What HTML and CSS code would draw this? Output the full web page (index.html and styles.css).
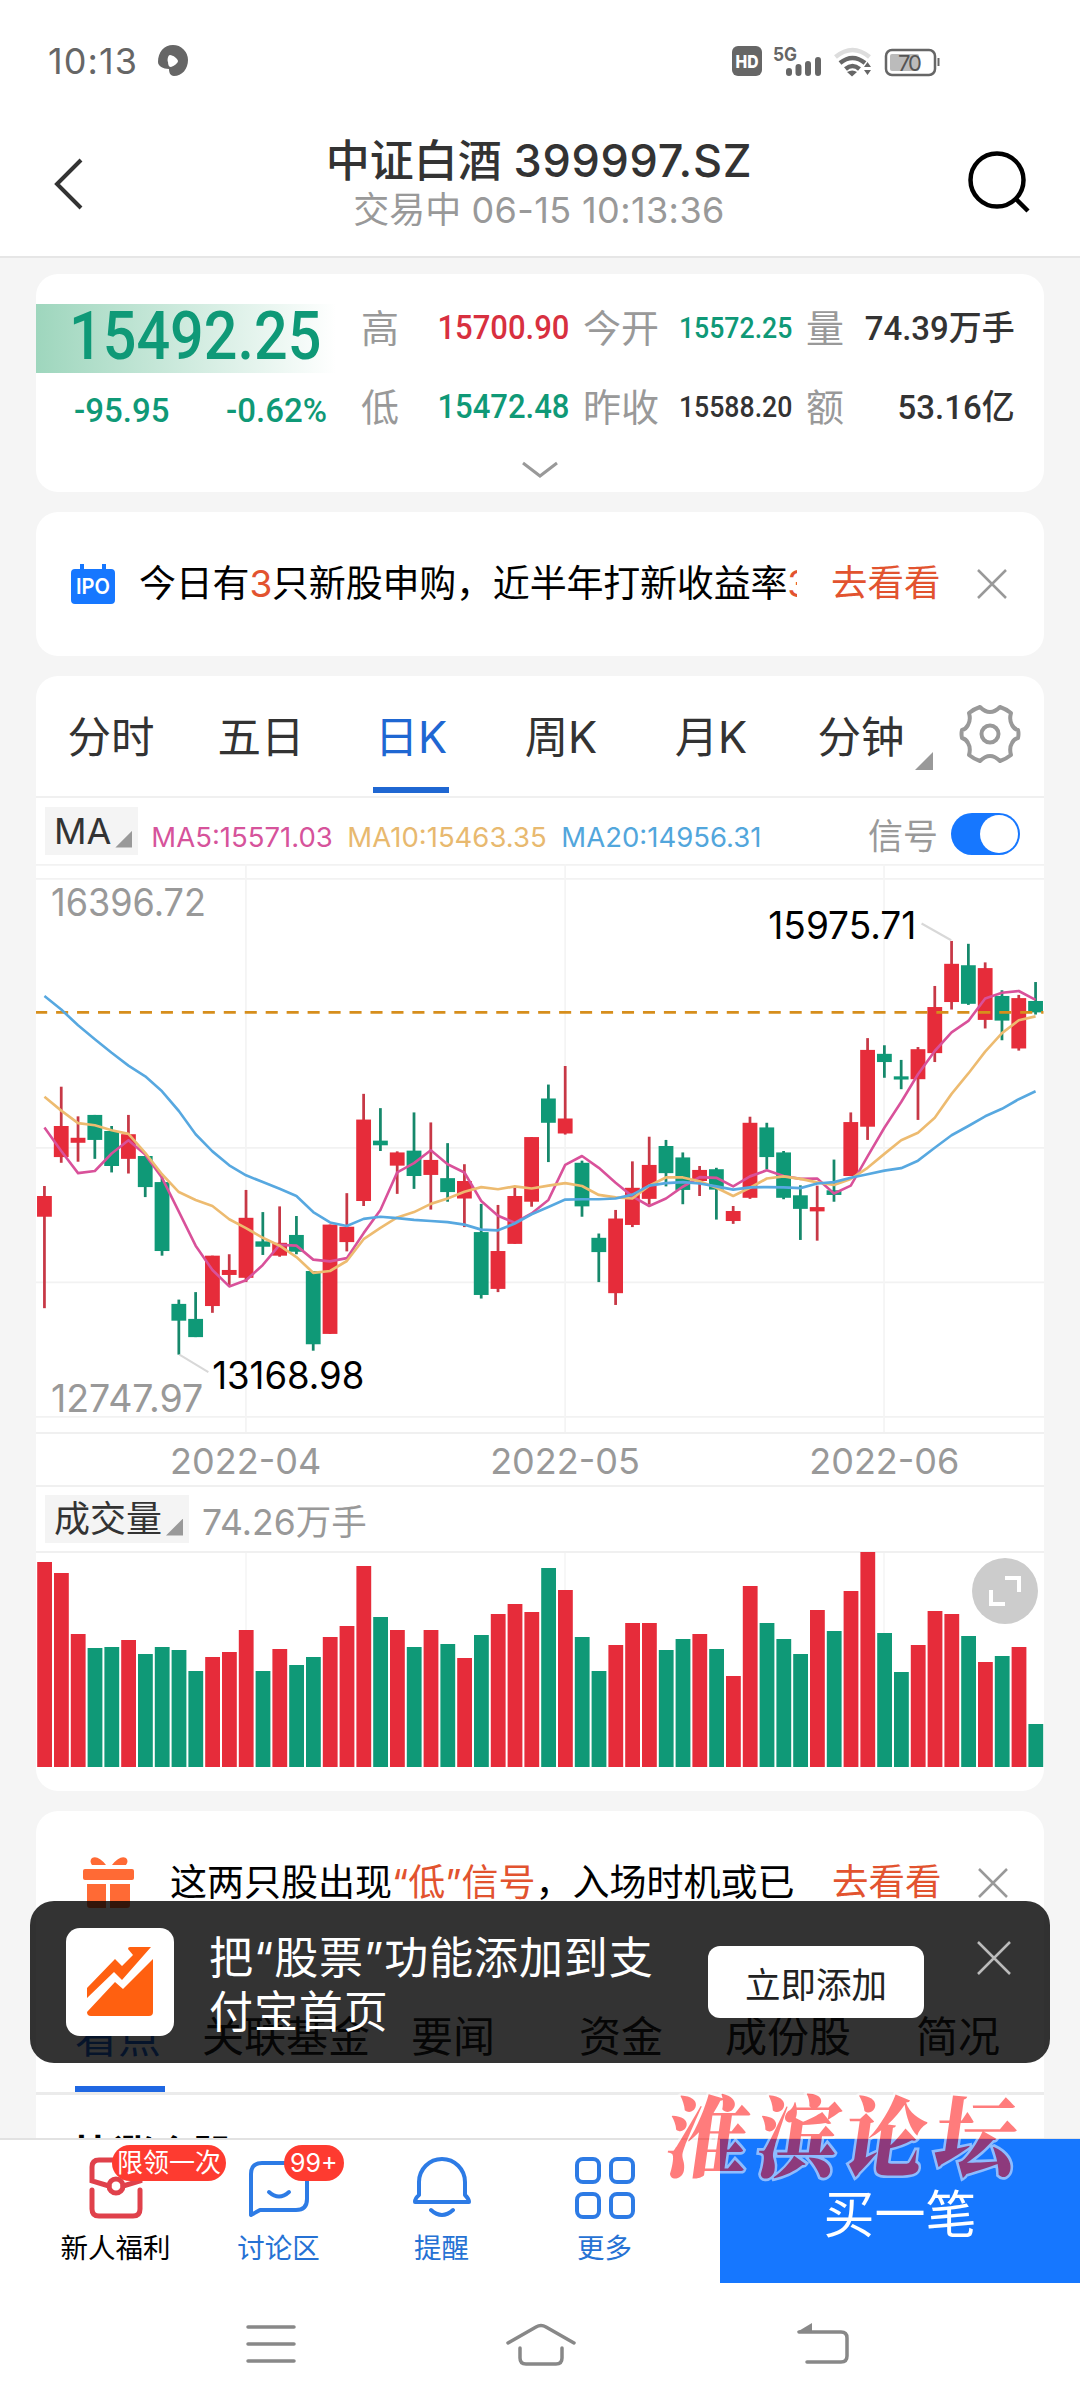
FILE: index.html
```html
<!DOCTYPE html>
<html lang="zh-CN">
<head>
<meta charset="utf-8">
<title>中证白酒 399997.SZ</title>
<link rel="stylesheet" href="styles.css">
</head>
<body>
<div class="phone">
  <header class="top">
    <div class="status">
      <span class="clock">10:13</span>
      <svg class="status-app" width="30" height="32" viewBox="0 0 30 32"><path fill-rule="evenodd" fill="#666" d="M15 0a15 15 0 0 1 15 15c0 9-6 16-14 16-4 0-5-4-5-7C5 24 0 21 0 17 0 7 6 0 15 0zM12 10c-2 0-3 5-2 7 0 3 1 5 3 5 3-1 7-4 7-6s-5-6-8-6z"/></svg>
      <svg class="status-icons" width="212" height="34" viewBox="0 0 212 34">
        <rect x="0" y="2" width="30" height="30" rx="6" fill="#666"/>
        <text x="3.500" y="23.500" font-size="18" font-weight="800" fill="#fff" textLength="23" lengthAdjust="spacingAndGlyphs" class="label">HD</text>
        <text x="41" y="16.500" font-size="19" font-weight="700" fill="#666" textLength="24" lengthAdjust="spacingAndGlyphs" class="label">5G</text>
        <path stroke="#666" stroke-width="6" stroke-linecap="round" d="M57 27v2M66.500 23v6M76 20v9M86 16v13"/>
        <g fill="none" stroke-width="4.500"><path stroke="#ddd" d="M103.500 13q17-14 34 0"/><path stroke="#666" d="M108 19q12.500-10 25 0M113.500 25q7-6 14 0"/></g>
        <path fill="#666" d="M115 28q5.500-3 10 0l-5 4.500zM132 23l3.500-5 3.500 5zM132 26l3.500 5 3.500-5z"/>
        <rect x="154" y="6" width="49" height="25" rx="6" fill="none" stroke="#666" stroke-width="2.500"/>
        <rect x="158" y="10" width="29" height="17" rx="2" fill="#bbb"/>
        <path stroke="#666" stroke-width="2" d="M206.500 14v8"/>
        <text x="166" y="26.500" font-size="22" fill="#555" textLength="24" class="label">70</text>
      </svg>
    </div>
    <div class="titlebar">
      <svg class="back" width="30" height="52" viewBox="0 0 30 52"><path d="M27 2 3 26l24 24" fill="none" stroke="#333" stroke-width="4"/></svg>
      <div class="heading">
        <h1>中证白酒 <span class="code">399997.SZ</span></h1>
        <p>交易中 <span class="time">06-15 10:13:36</span></p>
      </div>
      <svg class="search" width="64" height="64" viewBox="0 0 64 64"><g fill="none" stroke="#000" stroke-width="4.500"><circle cx="29" cy="29" r="26.500"/><path d="m48 48 12 12"/></g></svg>
    </div>
  </header>

  <main class="content">
    <section class="card quote">
      <div class="quote-body">
        <div class="last">
          <div class="price"><span class="din">15492.25</span></div>
          <div class="change"><span class="din">-95.95</span><span class="din">-0.62%</span></div>
        </div>
        <dl class="stats">
          <div><dt>高</dt><dd class="up din">15700.90</dd></div>
          <div><dt>今开</dt><dd class="down din small">15572.25</dd></div>
          <div><dt>量</dt><dd class="big">74.39万手</dd></div>
          <div><dt>低</dt><dd class="down din">15472.48</dd></div>
          <div><dt>昨收</dt><dd class="din small">15588.20</dd></div>
          <div><dt>额</dt><dd class="big">53.16亿</dd></div>
        </dl>
      </div>
      <svg class="expand" width="38" height="20" viewBox="0 0 38 20"><path d="m2 2 17 13L36 2" fill="none" stroke="#999" stroke-width="3"/></svg>
    </section>

    <section class="card notice ipo">
      <svg class="ipo-icon" width="44" height="40" viewBox="0 0 44 40"><path fill="#1677ff" d="M9 0h4v5h18V0h4v5h5q4 0 4 4v27q0 4-4 4H4q-4 0-4-4V9q0-4 4-4h5z"/><text x="5" y="30" font-size="22" font-weight="600" fill="#fff" textLength="34" lengthAdjust="spacingAndGlyphs" class="label">IPO</text></svg>
      <p class="notice-text">今日有<em>3</em>只新股申购，近半年打新收益率<em>3</em></p>
      <a class="go">去看看</a>
      <svg class="close" width="32" height="30" viewBox="0 0 32 30"><path d="m2 1 28 28M30 1 2 29" stroke="#999" stroke-width="2.500"/></svg>
    </section>

    <section class="card chart-card">
      <nav class="periods">
        <a>分时</a><a>五日</a><a class="active">日K</a><a>周K</a><a>月K</a><a class="more">分钟<i class="tri"></i></a>
        <svg class="gear" width="64" height="62" viewBox="0 0 64 62"><g fill="none" stroke="#999" stroke-width="4" stroke-linejoin="round"><path d="M22 4Q27 9 32 9T42 4Q48 6 53 10 51 17 54 22q2 4 6 5 1 4 0 8-4 1-6 5-3 5-1 12-5 4-11 6-5-5-10-5t-10 5Q16 56 11 52q2-7-1-12-2-4-6-5-1-4 0-8 4-1 6-5 3-5 1-12 5-4 11-6z"/><circle cx="32" cy="31" r="8.500"/></g></svg>
      </nav>
      <div class="ma-row">
        <span class="chip">MA<i class="tri"></i></span>
        <span class="ma ma5">MA5:15571.03</span>
        <span class="ma ma10">MA10:15463.35</span>
        <span class="ma ma20">MA20:14956.31</span>
        <span class="signal">信号</span>
        <span class="toggle"><i></i></span>
      </div>
      <svg id="candles" class="candles" width="1008" height="568" viewBox="104.500 11.600 2927 1590" preserveAspectRatio="none"></svg>
      <div class="dates"><span>2022-04</span><span>2022-05</span><span>2022-06</span></div>
      <div class="vol-row">
        <span class="chip">成交量<i class="tri"></i></span>
        <span class="vol">74.26万手</span>
      </div>
      <div class="volume">
        <svg id="bars" width="1008" height="216" viewBox="0 0 1008 216"></svg>
        <svg class="full" width="66" height="66" viewBox="0 0 66 66"><circle cx="33" cy="33" r="33" fill="#ccc"/><path d="M33 20h14v14M19 32v14h14" fill="none" stroke="#fff" stroke-width="4"/></svg>
      </div>
    </section>

    <section class="card news">
      <div class="notice gift">
        <svg class="gift-icon" width="52" height="52" viewBox="0 0 52 52"><g fill="#ff6a35"><path d="M23 8H9Q6 4 9 1q6-3 14 7zM29 8h14q3-4 0-7-6-3-14 7z"/><rect x="0" y="12" width="51" height="11" rx="2"/><path d="M4 27h19v24H7q-3 0-3-3zM27 27h20v21q0 3-3 3H27z"/></g></svg>
        <p class="notice-text">这两只股出现<em>“低”信号</em>，入场时机或已</p>
        <a class="go">去看看</a>
        <svg class="close" width="32" height="30" viewBox="0 0 32 30"><path d="m2 1 28 28M30 1 2 29" stroke="#999" stroke-width="2.500"/></svg>
      </div>
      <nav class="tabs">
        <a class="active">看点</a><a>关联基金</a><a>要闻</a><a>资金</a><a>成份股</a><a>简况</a>
      </nav>
      <h2>快涨个股</h2>
    </section>
  </main>

  <aside class="toast">
    <svg width="108" height="108" viewBox="0 0 108 108"><rect width="108" height="108" rx="14" fill="#fff"/><g fill="#ff6010"><path d="M21 70V60l28-29 7 7 11-11-5-6q0-2 2-2h21L56 52l-8-8z"/><path d="m21 84 28-30 8 7 30-30v53q0 4-4 4H25q-4 0-4-4z"/></g></svg>
    <p>把“股票”功能添加到支付宝首页</p>
    <button>立即添加</button>
    <svg class="toast-close" width="36" height="34" viewBox="0 0 36 34"><path d="m2 1 32 32M34 1 2 33" stroke="#bbb" stroke-width="2.500"/></svg>
  </aside>

  <footer class="actions">
    <a class="item dark">
      <svg width="54" height="62" viewBox="0 0 54 62"><g fill="none" stroke="#e0414b" stroke-width="5" stroke-linecap="round"><path d="M20 29 3 24V10q0-7 7-7h34q7 0 7 7v14l-17 5M3 33v19q0 7 7 7h34q7 0 7-7V33"/><circle cx="27" cy="29" r="7"/></g></svg>
      <span>新人福利</span><b class="badge wide">限领一次</b>
    </a>
    <a class="item">
      <svg width="60" height="62" viewBox="0 0 60 62"><g fill="none" stroke="#2d7be5" stroke-width="4" stroke-linecap="round" stroke-linejoin="round"><path d="M2 58V17Q2 6 13 6h34q11 0 11 11v25q0 11-11 11H11z"/><path d="M20 35q10 9 20 0"/></g></svg>
      <span>讨论区</span><b class="badge">99+</b>
    </a>
    <a class="item">
      <svg width="58" height="62" viewBox="0 0 58 62"><g fill="none" stroke="#2d7be5" stroke-width="4" stroke-linecap="round" stroke-linejoin="round"><path d="M6 38V25a23 23 0 0 1 46 0v13q4 4 4 7H2q0-4 4-7zM18 53q11 10 22 0"/></g></svg>
      <span>提醒</span>
    </a>
    <a class="item">
      <svg width="60" height="62" viewBox="0 0 60 62"><g fill="none" stroke="#2d7be5" stroke-width="4"><rect x="2" y="2" width="22" height="23" rx="6"/><rect x="36" y="2" width="22" height="23" rx="6"/><rect x="2" y="37" width="22" height="23" rx="6"/><rect x="36" y="37" width="22" height="23" rx="6"/></g></svg>
      <span>更多</span>
    </a>
    <button class="buy">买一笔</button>
  </footer>

  <nav class="system">
    <svg width="50" height="42" viewBox="0 0 50 42"><path d="M2 3h46M2 20h46M2 37h46" stroke="#888" stroke-width="3.500" stroke-linecap="round"/></svg>
    <svg width="72" height="44" viewBox="0 0 72 44"><path d="M3 20 31 4q5-3 10 0l28 16M15 25v10q0 6 6 6h30q6 0 6-6V25" fill="none" stroke="#888" stroke-width="3.500" stroke-linecap="round"/></svg>
    <svg width="52" height="42" viewBox="0 0 52 42"><path d="M2 9h42q6 0 6 6v18q0 6-6 6H10" fill="none" stroke="#888" stroke-width="3.500" stroke-linecap="round"/><path d="M0 9 15 0v10z" fill="#888"/></svg>
  </nav>

  <svg class="watermark" width="370" height="110" viewBox="0 0 370 110">
    <g transform="translate(16 0) skewX(-8) scale(1 1.080)"><text y="78" x="0 91 178 268">淮滨论坛</text></g>
  </svg>
</div>
<script src="chart.js"></script>
</body>
</html>
```
FILE: styles.css
```css
* { box-sizing: border-box; margin: 0; padding: 0; }
body { width: 1080px; font-family: Inter, "Noto Sans CJK SC", sans-serif; color: #333; background: #f5f5f5; }
svg { display: block; flex: none; }
a, span, button { white-space: nowrap; }
button { border: 0; font-family: inherit; }
em, i { font-style: normal; }
.label { font-family: Inter, sans-serif; }
.phone { position: relative; width: 1080px; height: 2408px; display: flex; flex-direction: column; overflow: hidden; }

.top { height: 258px; background: #fff; border-bottom: 2px solid #e6e6e6; flex: none; }
.status { height: 122px; display: flex; align-items: center; padding-left: 48px; }
.clock { width: 110px; font-size: 36px; letter-spacing: 1.1px; color: #666; }
.status-icons { margin-left: 544px; }
.titlebar { height: 134px; display: flex; align-items: flex-start; padding: 10px 48px 0 54px; }
.back { margin-top: 26px; }
.heading { flex: 1; text-align: center; padding-left: 26px; }
h1 { font-size: 44px; line-height: 54px; font-weight: 500; margin-top: 2px; }
.code { font-size: 45px; letter-spacing: .7px; }
.heading p { font-size: 36px; line-height: 44px; color: #999; }
.time { letter-spacing: .4px; }
.search { margin-top: 19px; }

.content { height: 1880px; flex: none; overflow: hidden; padding: 16px 36px 0; display: flex; flex-direction: column; gap: 20px; }
.card { flex: none; background: #fff; border-radius: 22px; }
.quote { height: 218px; padding-top: 30px; }
.quote-body { display: flex; }
.last { width: 325px; }
.price { height: 69px; width: 300px; padding-left: 33px; background: linear-gradient(90deg, #9ed6bd, #fff); color: #0f9977; }
.din { display: inline-block; font-family: Roboto, sans-serif; font-weight: 500; white-space: nowrap; }
.price .din { font-size: 67px; line-height: 65px; transform: scaleX(.885); transform-origin: 0 50%; }
.change { display: flex; justify-content: space-between; margin-top: 18px; padding: 0 34px 0 38px; color: #0f9977; font-size: 33px; line-height: 40px; }
.stats { flex: 1; display: grid; grid-template-columns: 208px 209px 209px; column-gap: 14px; grid-template-rows: 46px 46px; row-gap: 33px; margin-top: 1px; }
.stats > div { display: flex; justify-content: space-between; align-items: center; line-height: 46px; }
dt { font-size: 38px; color: #999; }
dd.din { font-size: 33px; transform: scaleX(.94); transform-origin: 100% 50%; }
dd.small { font-size: 29px; transform: scaleX(.92); }
dd.big { font-family: Roboto, "Noto Sans CJK SC", sans-serif; font-size: 34px; font-weight: 500; transform: scaleX(.97); transform-origin: 100% 50%; }
.up { color: #d8303f; }
.down { color: #0f9977; }
.expand { margin: 30px auto 0; }

.notice { display: flex; align-items: center; }
.ipo { height: 144px; padding-left: 35px; }
.notice-text { width: 658px; font-size: 37px; line-height: 50px; white-space: nowrap; overflow: hidden; color: #000; margin-left: 24px; }
.ipo .notice-text { letter-spacing: -.2px; }
.notice-text em, .go { color: #e2532f; }
.go { font-size: 36.500px; line-height: 50px; margin: -3px 0 0 34px; }
.close { margin-left: 35px; }

.chart-card { height: 1115px; }
.periods { height: 122px; display: flex; border-bottom: 2px solid #f0f0f0; }
.periods a { position: relative; width: 150px; text-align: center; font-size: 43.500px; line-height: 122px; }
.periods a.active { color: #1f67d2; }
.periods a.active::after { content: ""; position: absolute; left: 37px; bottom: 3px; width: 76px; height: 6px; background: #1f67d2; }
.gear { margin: 27px 0 0 22px; }
.tri { display: inline-block; width: 17px; height: 17px; background: #999; clip-path: polygon(100% 0, 100% 100%, 0 100%); }
.more .tri { position: absolute; left: 129px; top: 76px; width: 18px; height: 18px; }
.ma-row { height: 66px; display: flex; align-items: center; padding: 0 24px 0 9px; }
.chip { height: 48px; line-height: 52px; background: #f4f4f4; padding: 0 6px 0 9px; font-size: 36px; flex: none; display: flex; align-items: center; }
.chip .tri { margin: 16px 0 0 4px; }
.ma { font-size: 27.500px; line-height: 40px; padding-top: 11px; }
.ma5 { color: #d6539b; margin-left: 13px; width: 196px; }
.ma10 { color: #e8b96f; width: 214px; }
.ma20 { color: #52a6dc; }
.signal { margin-left: auto; font-size: 35px; color: #999; padding-top: 5px; }
.toggle { width: 69px; height: 42px; border-radius: 21px; background: #1677ff; margin: 5px 0 0 13px; }
.toggle i { display: block; width: 38px; height: 38px; border-radius: 50%; background: #fff; margin: 2px 0 0 29px; }
.toggle { padding-top: 2px; }
.toggle i { margin-top: 0; }
.dates { height: 55px; border-top: 2px solid #f0f0f0; border-bottom: 2px solid #f0f0f0; display: flex; padding-left: 50px; font-size: 36px; line-height: 55px; color: #999; }
.dates span { width: 319.500px; text-align: center; }
.vol-row { height: 64px; display: flex; align-items: center; padding-left: 9px; font-size: 36px; }
.vol { margin-left: 13px; color: #999; font-size: 35.500px; }
.volume { position: relative; }
.full { position: absolute; left: 936px; top: 7px; }

.news { height: 400px; }
.gift { height: 144px; padding-left: 47px; }
.gift .notice-text { margin-left: 35px; width: 630px; }
.gift .go { margin-left: 32px; }
.tabs { height: 140px; display: flex; padding: 60px 0 0 39px; border-bottom: 3px solid #ebebeb; font-size: 42px; line-height: 44px; color: #222; }
.tabs a { margin-right: 41px; }
.tabs a.active { position: relative; color: #1f67d2; font-size: 43px; }
.tabs a.active::after { content: ""; position: absolute; left: 0; bottom: 0; width: 90px; height: 6px; background: #1f67e2; }
.tabs a:nth-child(3) { margin-right: 84px; }
.tabs a:nth-child(4) { margin-right: 62px; }
.tabs a:nth-child(5) { margin-right: 65px; }
h2 { font-size: 40px; line-height: 50px; color: #000; padding: 35px 0 0 37px; }

.toast { position: absolute; left: 30px; top: 1901px; width: 1020px; height: 162px; border-radius: 24px; background: rgba(0,0,0,.8); display: flex; padding: 27px 38px 0 36px; }
.toast p { width: 450px; margin: 3px 0 0 35px; font-size: 44px; letter-spacing: .9px; line-height: 54px; color: #fff; word-break: break-all; }
.toast button { width: 216px; height: 72px; border-radius: 12px; background: #fff; color: #222; font-size: 35.500px; margin: 18px 0 0 49px; }
.toast-close { margin: 13px 0 0 52px; }

.actions { height: 145px; flex: none; display: flex; background: #fff; border-top: 2px solid #e2e2e2; padding-left: 34px; }
.item { position: relative; width: 163px; display: flex; flex-direction: column; align-items: center; padding-top: 17px; color: #2672d4; font-size: 27.500px; line-height: 40px; }
.item span { margin-top: 9px; }
.item.dark { color: #000; }
.badge { position: absolute; left: 87px; top: 5px; height: 36px; border-radius: 18px; background: #fe3b30; color: #fff; font-size: 25px; line-height: 36px; font-weight: 400; padding: 0 6px; }
.badge.wide { left: 78px; padding: 0 5px; font-size: 26px; }
.buy { width: 360px; margin: -1px 0 0 34px; height: 144px; background: #1677ff; color: #fff; font-size: 51px; line-height: 144px; padding-top: 4px; }
.system { flex: 1; display: flex; background: #fff; padding: 41px 0 0 246px; }
.system svg:nth-child(2) { margin-left: 209px; margin-top: -1px; }
.system svg:nth-child(3) { margin-left: 220px; margin-top: -1px; }

.watermark { position: absolute; left: 658px; top: 2086px; opacity: .51; overflow: visible; }
.watermark text { font-family: "Noto Serif CJK SC", "Noto Sans CJK SC", serif; font-weight: 900; font-size: 82px; fill: #ff0000; stroke: #fff; stroke-width: 5px; paint-order: stroke; }
```
FILE: chart.js
```js
const RED = '#e62c3a', GREEN = '#0f9977';
// direction, high, body top, body bottom, low
const candles = `r 913 941 999 1255|r 635 745 832 848|r 718 778 792 845|g 714 714 784 837|g 745 759 857 875|r 714 768 837 878|g 829 829 916 944|g 885 902 1095 1108|g 1231 1243 1290 1385|g 1210 1285 1336 1336|r 1108 1108 1249 1268|r 1104 1148 1162 1192|r 924 1002 1170 1182|g 986 1068 1083 1106|r 970 1072 1108 1111|g 997 1050 1097 1104|g 1151 1151 1356 1374|r 1021 1021 1327 1327|r 933 1027 1070 1096|r 655 727 955 969|g 695 786 799 815|r 816 819 856 935|g 707 814 885 921|r 735 840 882 979|g 793 891 930 957|r 852 899 948 1028|g 963 1042 1218 1228|r 966 1095 1201 1210|r 918 941 1075 1075|r 776 776 957 971|g 629 668 736 846|r 577 724 766 769|g 842 848 970 999|g 1046 1058 1098 1182|r 980 1004 1213 1246|r 844 918 1022 1028|r 775 854 949 965|g 784 801 877 914|g 819 833 924 964|r 857 868 899 941|g 862 866 923 1007|r 969 983 1011 1019|r 719 736 946 949|g 736 749 832 866|g 815 819 946 950|g 911 939 977 1064|r 912 972 984 1066|g 839 925 938 957|r 707 734 885 885|r 499 532 747 784|g 519 543 566 610|g 560 606 615 642|r 524 530 614 728|r 353 412 541 566|r 227 291 398 419|g 235 295 403 406|r 287 303 448 472|g 365 381 450 505|r 378 387 528 534|g 342 395 427 433`
  .split('|').map(s => s.split(' ').map((v, i) => i ? +v : v));
const ma5 = [749,815,877,871,822,785,825,890,985,1080,1148,1194,1177,1134,1078,1080,1119,1124,1115,1045,980,875,849,813,852,875,955,996,1016,990,952,854,829,862,904,942,969,948,915,888,890,914,886,869,885,893,892,934,912,830,750,678,600,535,483,451,388,372,367,392];
const ma10 = [663,702,737,743,757,767,820,880,930,952,969,1006,1031,1058,1080,1112,1156,1151,1123,1062,1030,1001,986,963,948,929,916,922,914,920,912,905,913,938,945,948,912,889,889,900,918,941,918,892,886,893,903,910,893,862,823,785,764,722,655,598,537,485,449,438];
const ma20 = [381,419,463,502,540,576,606,648,703,768,816,855,883,902,921,941,986,1015,1025,1005,999,1003,1008,1011,1014,1021,1035,1037,1018,992,972,951,950,950,948,937,912,905,902,906,914,923,917,916,917,919,906,902,890,880,870,863,842,806,771,745,718,697,670,648];
const volumes = [205,194,133,119,120,127,113,120,117,96,110,115,137,96,118,102,110,130,141,201,150,137,120,137,123,109,132,153,163,155,199,177,130,96,122,144,144,117,128,133,118,91,181,144,128,113,157,136,176,215,134,95,122,156,153,131,105,111,120,43];

const x = i => 129 + 48.780 * i;
const line = (x1, y1, x2, y2, c, w, extra = '') => `<line x1="${x1}" y1="${y1}" x2="${x2}" y2="${y2}" stroke="${c}" stroke-width="${w}" ${extra}/>`;
const poly = (pts, c) => `<polyline fill="none" stroke="${c}" stroke-width="7.500" stroke-linejoin="round" points="${pts.map((v, i) => x(i) + ',' + v).join(' ')}"/>`;
const text = (tx, ty, len, c, s) => `<text class="label" x="${tx}" y="${ty}" font-size="106" fill="${c}" textLength="${len}" lengthAdjust="spacingAndGlyphs">${s}</text>`;

let out = '';
[14, 53, 806, 1183, 1559].forEach(y => out += line(104, y, 3032, y, '#f2f2f2', 5));
[714, 1641, 2567].forEach(v => out += line(v, 12, v, 1602, '#f4f4f4', 5));
candles.forEach(([d, h, t, b, l], i) => {
  const c = d === 'r' ? RED : GREEN;
  out += line(x(i), h, x(i), l, d === 'r' ? '#c73846' : '#16886b', 8);
  out += `<rect x="${x(i) - 21.500}" y="${t}" width="43" height="${b - t}" fill="${c}"/>`;
});
out += line(102, 427, 3030, 427, '#d68e1c', 8, 'stroke-dasharray="35 25.860"');
out += poly(ma5, '#d9519a') + poly(ma10, '#edbb70') + poly(ma20, '#57a8e0');
out += line(521, 1385, 605, 1434, '#d8d8d8', 6) + line(2676, 178, 2762, 225, '#d8d8d8', 6);
out += text(148, 156, 450, '#999', '16396.72') + text(148, 1547, 442, '#999', '12747.97');
out += text(616, 1480, 442, '#000', '13168.98') + text(2231, 221, 430, '#000', '15975.71');
document.getElementById('candles').innerHTML = out;

let bars = [210, 529, 848].map(v => line(v, 0, v, 216, '#f4f4f4', 1.500)).join('') + line(0, 1, 1008, 1, '#f0f0f0', 2);
volumes.forEach((v, i) => {
  bars += `<rect x="${(1.200 + i * 16.800).toFixed(1)}" y="${216 - v}" width="14.800" height="${v}" fill="${candles[i][0] === 'r' ? RED : GREEN}"/>`;
});
document.getElementById('bars').innerHTML = bars;
```
